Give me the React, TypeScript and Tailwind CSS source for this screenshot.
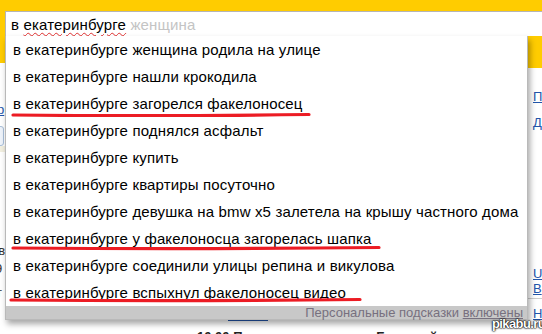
const SUGGESTS = [
  'в екатеринбурге женщина родила на улице',
  'в екатеринбурге нашли крокодила',
  'в екатеринбурге загорелся факелоносец',
  'в екатеринбурге поднялся асфальт',
  'в екатеринбурге купить',
  'в екатеринбурге квартиры посуточно',
  'в екатеринбурге девушка на bmw x5 залетела на крышу частного дома',
  'в екатеринбурге у факелоносца загорелась шапка',
  'в екатеринбурге соединили улицы репина и викулова',
  'в екатеринбурге вспыхнул факелоносец видео',
];

// red marker strokes: [x1, x2, y-offset inside row]
const MARKS: Record<number, [number, number, number]> = {
  2: [7, 303, 25],
  7: [7, 373, 23],
  9: [5, 354, 21],
};

function Mark({ x1, x2, y }: { x1: number; x2: number; y: number }) {
  const mid = (x1 + x2) / 2;
  return (
    <svg className="absolute left-0 top-0 pointer-events-none" width="523" height="27">
      <path
        d={`M${x1} ${y} Q${mid} ${y + 1.5} ${x2} ${y - 0.5}`}
        stroke="#ec1c24"
        strokeWidth="3.2"
        strokeLinecap="round"
        fill="none"
      />
    </svg>
  );
}

export default function App() {
  return (
    <div className="relative w-[542px] h-[334px] overflow-hidden bg-white font-['Liberation_Sans',Arial,sans-serif] text-black">
      {/* search bar */}
      <div className="bg-[#ffcc00] pt-[11px] pl-[5px]">
        <div className="h-[25px] bg-white border-t border-l border-[#b5b5b5] flex items-center pl-[5px] text-[15px] leading-none tracking-[0.15px]">
          <span>в&nbsp;</span>
          <span className="underline decoration-wavy decoration-[#e03030] decoration-1 underline-offset-[2px]">екатеринбурге</span>
          <span className="text-[#c4c4c4]">&nbsp;женщина</span>
        </div>
      </div>

      {/* page behind the dropdown */}
      <div className="flex justify-between h-[298px]">
        <div className="w-[5px] flex flex-col text-[13px] leading-none">
          <div className="h-[27px] bg-[#ffcc00]" />
          <div className="mt-[40px] -ml-[3px] text-[#2255aa] underline">р</div>
          <div className="mt-[10px] -ml-[6px] w-[10px] h-[20px] border border-[#a9bfd9] rounded-[3px] bg-[#eef3fa]" />
          <div className="h-[6px] bg-[#f2efe0]" />
          <div className="mt-[92px] -ml-[9px] text-[#333]">ев</div>
          <div className="mt-[5px] -ml-[5px] text-[#333]">9</div>
          <div className="mt-[11px] -ml-[4px] text-[#333]">т</div>
        </div>
        <div className="w-[14px] flex flex-col text-[13px] leading-none">
          <div className="h-[32px] bg-[#ffcc00]" />
          <div className="mt-[22px] ml-[5px] text-[#2255aa] underline">П</div>
          <div className="mt-[13px] ml-[5px] text-[#2255aa] underline">Д</div>
          <div className="mt-[138px] ml-[5px] text-[#2255aa] underline">U</div>
          <div className="mt-[2px] ml-[5px] text-[#2255aa] underline">B</div>
          <div className="mt-[3px] h-px bg-[#ccc]" />
          <div className="mt-[8px] ml-[5px] text-[#2255aa] underline">Н</div>
        </div>
      </div>
      <div className="absolute left-[228px] top-[320px] w-[40px] h-px bg-[#2255aa]" />
      <div className="absolute left-[197px] top-[330px] text-[13px] leading-none font-bold text-[#222] whitespace-nowrap">
        10.00 Прямая трансляция с Бурятией
      </div>

      {/* suggest dropdown */}
      <div className="absolute left-[5px] top-[36px] w-[523px] bg-white border border-t-0 border-[#b9b9b9] shadow-[2px_4px_6px_rgba(0,0,0,0.35)]">
        {SUGGESTS.map((s, i) => (
          <div key={i} className="relative h-[27px] flex items-center pl-[7px] text-[15px] leading-none tracking-[0.15px] whitespace-nowrap">
            {s}
            {MARKS[i] && <Mark x1={MARKS[i][0]} x2={MARKS[i][1]} y={MARKS[i][2]} />}
          </div>
        ))}
        <div className="h-[13px] bg-[#c8c8c8] flex items-center justify-end pr-[4px] text-[13px] leading-none text-[#77707f]">
          Персональные подсказки&nbsp;<span className="underline">включены</span>
        </div>
      </div>

      {/* watermark */}
      <div className="absolute left-[492px] top-[317px] text-[13px] font-bold tracking-[-0.6px] leading-none text-white [text-shadow:0_0_2px_#000,0_0_2px_#000,0_0_1px_#000]">
        pikabu.ru
      </div>
    </div>
  );
}
